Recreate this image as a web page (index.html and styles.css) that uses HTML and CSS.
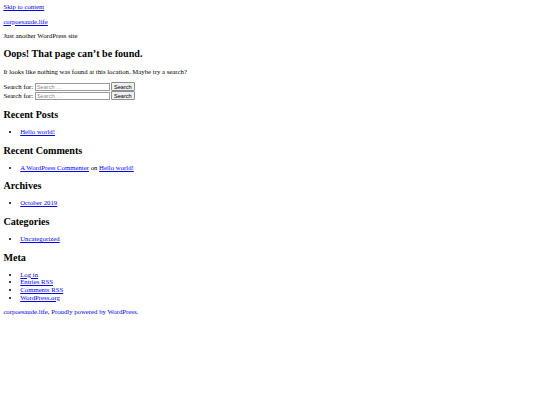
FILE: index.html
```html
<!DOCTYPE html>
<html lang="en">
<head>
<meta charset="utf-8">
<title>Page not found – corpoesaude.life</title>
<link rel="stylesheet" href="styles.css">
</head>
<body class="error404">
<div id="page" class="site">
<a class="skip-link" href="#content">Skip to content</a>
<header class="site-header">
<div class="site-branding">
<p class="site-title"><a href="#">corpoesaude.life</a></p>
<p class="site-description">Just another WordPress site</p>
</div>
</header>
<div id="content" class="site-content">
<section class="error-404">
<header class="page-header">
<h1 class="page-title">Oops! That page can’t be found.</h1>
</header>
<div class="page-content">
<p>It looks like nothing was found at this location. Maybe try a search?</p>
<form class="search-form">
<label><span class="search-label">Search for:</span> <input type="search" class="search-field" placeholder="Search …"></label> <input type="submit" class="search-submit" value="Search">
</form>
</div>
</section>
</div>
<footer class="site-footer">
<aside class="widget-area">
<section class="widget widget_search">
<form class="search-form">
<label><span class="search-label">Search for:</span> <input type="search" class="search-field" placeholder="Search …"></label> <input type="submit" class="search-submit" value="Search">
</form>
</section>
<section class="widget">
<h2 class="widget-title">Recent Posts</h2>
<ul class="widget-list">
<li><a href="#">Hello world!</a></li>
</ul>
</section>
<section class="widget">
<h2 class="widget-title">Recent Comments</h2>
<ul class="widget-list">
<li><span class="comment-author-link"><a href="#">A WordPress Commenter</a></span> on <a href="#">Hello world!</a></li>
</ul>
</section>
<section class="widget">
<h2 class="widget-title">Archives</h2>
<ul class="widget-list">
<li><a href="#">October 2019</a></li>
</ul>
</section>
<section class="widget">
<h2 class="widget-title">Categories</h2>
<ul class="widget-list">
<li><a href="#">Uncategorized</a></li>
</ul>
</section>
<section class="widget">
<h2 class="widget-title">Meta</h2>
<ul class="widget-list">
<li><a href="#">Log in</a></li>
<li><a href="#">Entries <abbr class="rss" title="Really Simple Syndication">RSS</abbr></a></li>
<li><a href="#">Comments <abbr class="rss" title="Really Simple Syndication">RSS</abbr></a></li>
<li><a href="#">WordPress.org</a></li>
</ul>
</section>
</aside>
<div class="site-info">
<a class="site-name" href="#">corpoesaude.life</a>, <a href="#">Proudly powered by WordPress.</a>
</div>
</footer>
</div>
</body>
</html>
```

FILE: styles.css
```css
body {
  font-family: "Liberation Serif", "Times New Roman", serif;
  font-size: 6.75px;
  line-height: 7.67px;
  margin: 3.375px;
  color: #000;
  background: #fff;
}
a {
  color: #0000ee;
}
p {
  margin: 6.75px 0;
}
.page-title,
.widget-title {
  font-size: 10.125px;
  line-height: 11.6px;
  font-weight: bold;
}
.page-title {
  margin: 8.6px 0 7.6px;
}
.widget-title {
  margin: 8.9px 0 7.5px;
}
.widget-list {
  margin: 6.6px 0 6.4px;
  padding-left: 16.875px;
}
.rss {
  text-decoration: none;
}
.search-form {
  margin: 0;
  height: 9px;
  display: flex;
  align-items: center;
  white-space: nowrap;
}
.search-form label {
  display: flex;
  align-items: center;
}
.search-label {
  margin-right: 1.7px;
}
.search-field {
  box-sizing: border-box;
  width: 75px;
  height: 8px;
  margin: 0 1px 0 0;
  padding: 0 1px;
  border: 1px solid #9a9a9a;
  border-radius: 0;
  font-family: "Liberation Sans", Arial, sans-serif;
  font-size: 5.6px;
  background: #fff;
  outline: none;
}
.search-field::placeholder {
  color: #8a8a8a;
}
.search-submit {
  box-sizing: border-box;
  width: 24px;
  height: 8.5px;
  margin: 0;
  padding: 0;
  border: 1px solid #8f8f8f;
  border-radius: 1px;
  background: #efefef;
  font-family: "Liberation Sans", Arial, sans-serif;
  font-size: 5.6px;
  line-height: 6px;
  color: #000;
}
```
